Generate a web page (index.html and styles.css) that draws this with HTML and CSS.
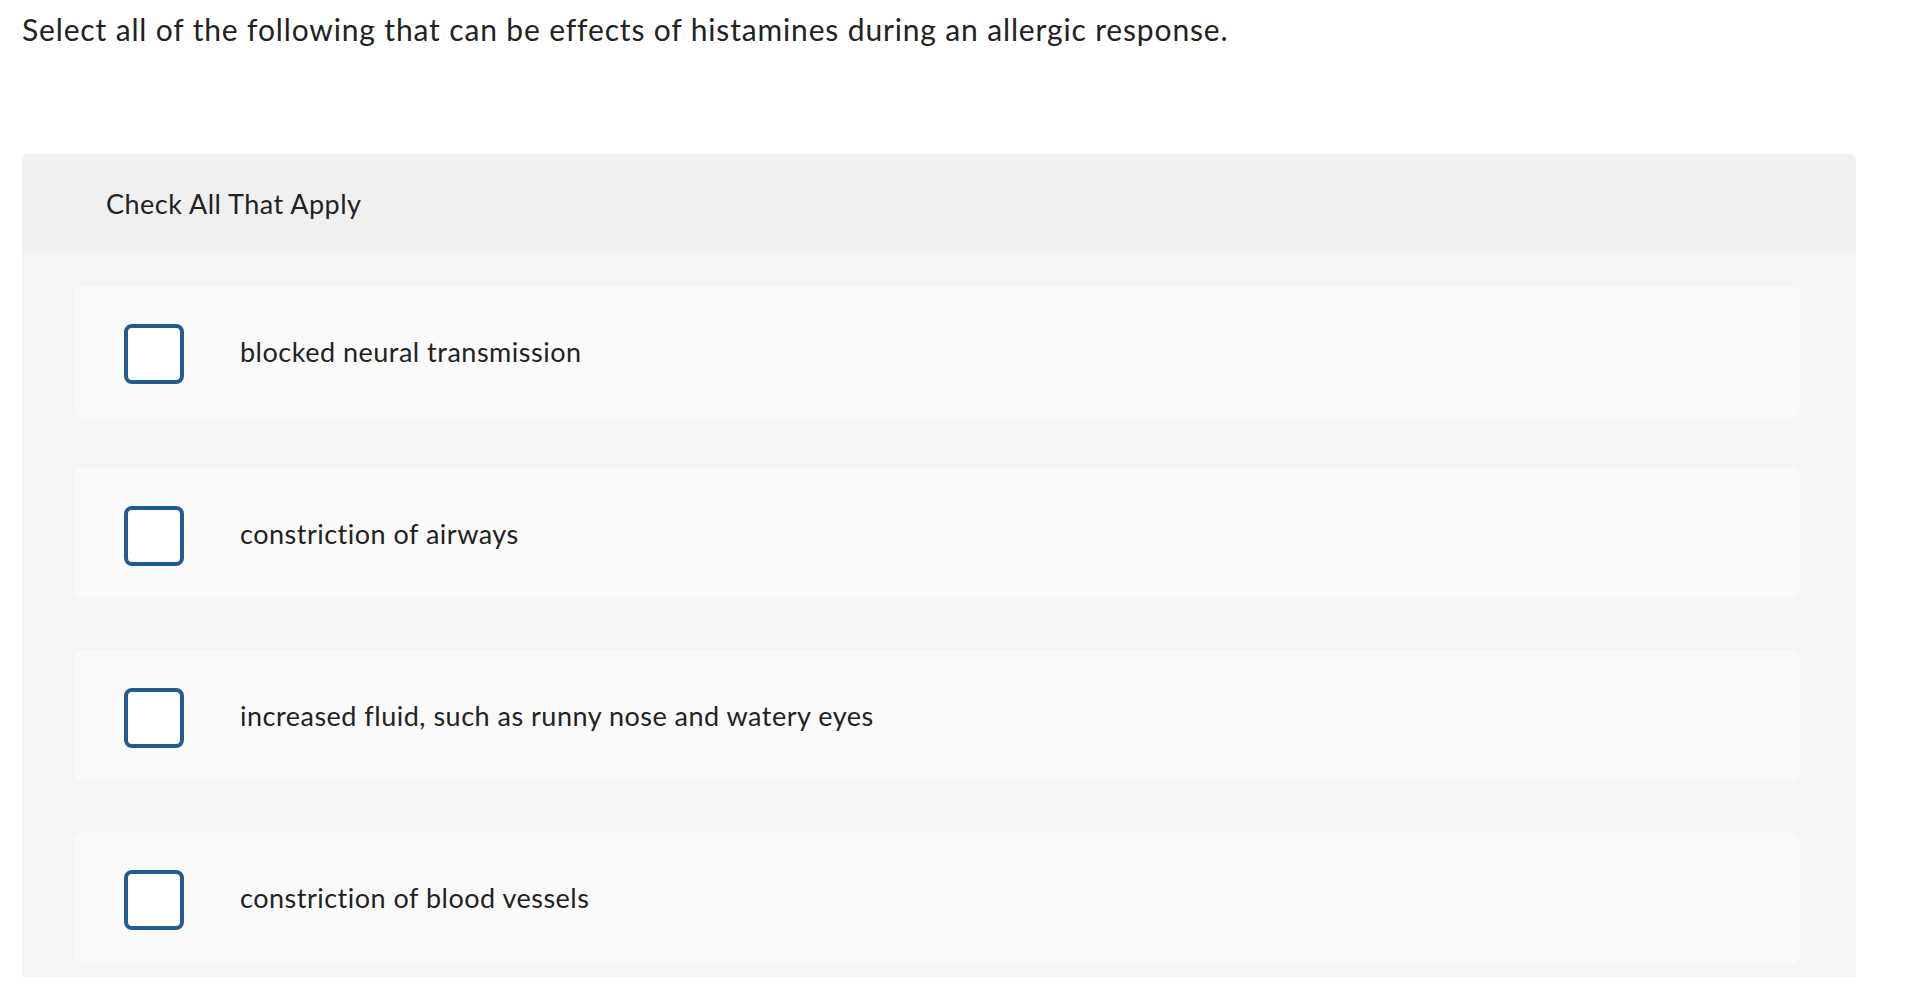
FILE: index.html
```html
<!DOCTYPE html>
<html lang="en">
<head>
<meta charset="utf-8">
<title>Check All That Apply</title>
<link rel="stylesheet" href="styles.css">
</head>
<body>
<div class="page">
  <p class="question">Select all of the following that can be effects of histamines during an allergic response.</p>
  <section class="panel">
    <div class="panel-head">Check All That Apply</div>
    <div class="panel-body">
      <label class="choice"><span class="box"></span><span class="text">blocked neural transmission</span></label>
      <label class="choice"><span class="box"></span><span class="text">constriction of airways</span></label>
      <label class="choice"><span class="box"></span><span class="text">increased fluid, such as runny nose and watery eyes</span></label>
      <label class="choice"><span class="box"></span><span class="text">constriction of blood vessels</span></label>
    </div>
  </section>
</div>
</body>
</html>
```
FILE: styles.css
```css
html, body {
  margin: 0;
  padding: 0;
  background: #ffffff;
}
body {
  font-family: Lato, "Open Sans", sans-serif;
  color: #222222;
}
.page {
  padding: 0 52px 0 22px;
}
.question {
  margin: 0;
  padding-top: 11px;
  font-size: 30px;
  line-height: 36px;
  letter-spacing: 0.85px;
}
.panel {
  margin-top: 107px;
  border-radius: 6px 6px 0 0;
  overflow: hidden;
}
.panel-head {
  height: 99px;
  display: flex;
  align-items: center;
  padding-left: 84px;
  background: #f0f0f0;
  font-size: 27px;
  letter-spacing: 0.5px;
}
.panel-body {
  background: #f5f5f5;
  padding: 33px 56px 14px 52px;
  display: flex;
  flex-direction: column;
  gap: 51px;
}
.choice {
  height: 131px;
  display: flex;
  align-items: center;
  padding-left: 50px;
  background: #fafafa;
  border-radius: 8px;
}
.box {
  width: 60px;
  height: 60px;
  margin-top: 4px;
  box-sizing: border-box;
  border: 4px solid #245b8f;
  border-radius: 8px;
  background: #ffffff;
  flex: none;
}
.text {
  margin-left: 56px;
  font-size: 27px;
  letter-spacing: 0.5px;
}
```
